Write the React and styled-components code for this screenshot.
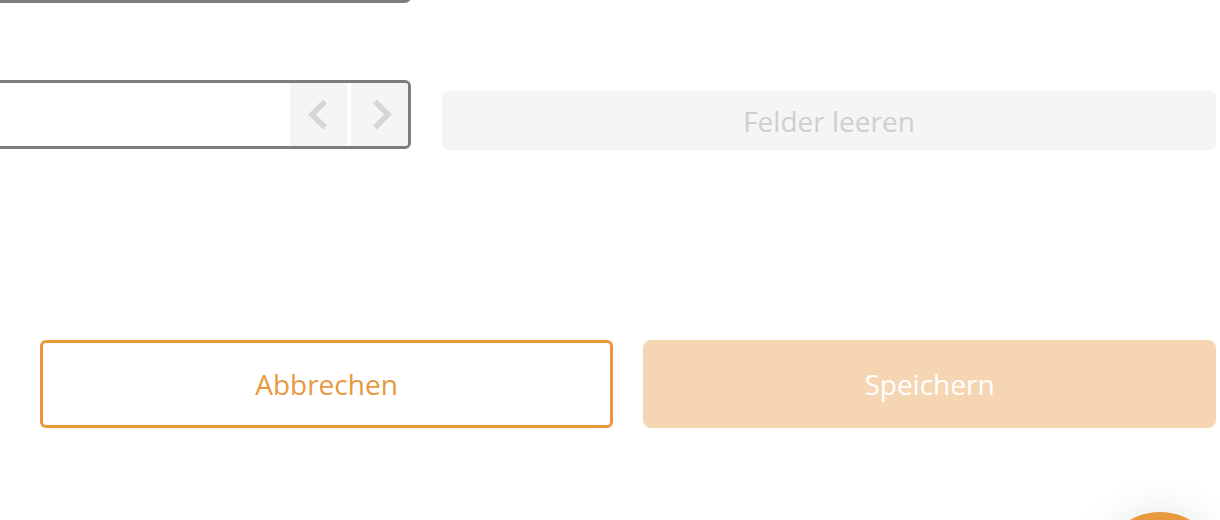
import React from 'react';
import styled, { createGlobalStyle } from 'styled-components';

const GlobalStyle = createGlobalStyle`
  html, body {
    margin: 0;
    padding: 0;
    background: #ffffff;
    overflow: hidden;
  }
  body {
    font-family: 'Open Sans', 'Noto Sans', sans-serif;
  }
`;

const Page = styled.div`
  width: 1220px;
  height: 520px;
  box-sizing: border-box;
  padding-right: 4px;
  overflow: hidden;
`;

const Fields = styled.div`
  display: grid;
  grid-template-columns: 451px 774px;
  column-gap: 31px;
  row-gap: 77px;
  margin-left: -40px;
  margin-top: -66px;
  align-items: start;
`;

const Input = styled.div`
  height: 69px;
  box-sizing: border-box;
  border: 3px solid #7f7d7a;
  border-radius: 6px;
  background: #fff;
  display: flex;
  justify-content: flex-end;
  overflow: hidden;
`;

const Arrows = styled.div`
  display: flex;
  gap: 4px;
`;

const ArrowButton = styled.button`
  width: 57px;
  height: 100%;
  border: none;
  padding: 0;
  background: #f5f5f5;
  display: flex;
  align-items: center;
  justify-content: center;
  cursor: pointer;
  svg {
    margin-left: ${(p) => (p.$next ? '4px' : '-2px')};
  }
`;

const GhostButton = styled.button`
  margin-top: 11px;
  height: 59px;
  border: none;
  border-radius: 6px;
  background: #f5f5f4;
  color: #cfcfcf;
  font-family: inherit;
  font-size: 28px;
  font-weight: 500;
  cursor: default;
`;

const Actions = styled.div`
  display: grid;
  grid-template-columns: 1fr 1fr;
  gap: 30px;
  margin-top: 190px;
  padding-left: 40px;
`;

const ActionButton = styled.button`
  height: 88px;
  box-sizing: border-box;
  font-family: inherit;
  font-size: 28px;
  font-weight: 500;
  border-radius: ${(p) => (p.$primary ? '8px' : '6px')};
  border: ${(p) => (p.$primary ? 'none' : '3px solid #e8993e')};
  background: ${(p) => (p.$primary ? '#f5d5b2' : '#ffffff')};
  color: ${(p) => (p.$primary ? '#ffffff' : '#e8993e')};
  cursor: pointer;
`;

const Fab = styled.div`
  position: fixed;
  right: 0;
  top: 512px;
  width: 120px;
  height: 120px;
  border-radius: 50%;
  background: #e8993e;
  box-shadow: 0 0 40px rgba(0, 0, 0, 0.1);
`;

const Chevron = ({ dir }) => (
  <svg width="20" height="31" viewBox="0 0 20 31">
    <polyline
      points={dir === 'left' ? '17,2.5 4,15.5 17,28.5' : '3,2.5 16,15.5 3,28.5'}
      fill="none"
      stroke="#d6d6d6"
      strokeWidth="5.5"
    />
  </svg>
);

export default function App() {
  return (
    <Page>
      <GlobalStyle />
      <Fields>
        <Input />
        <div />
        <Input>
          <Arrows>
            <ArrowButton aria-label="zurück">
              <Chevron dir="left" />
            </ArrowButton>
            <ArrowButton $next aria-label="weiter">
              <Chevron dir="right" />
            </ArrowButton>
          </Arrows>
        </Input>
        <GhostButton>Felder leeren</GhostButton>
      </Fields>
      <Actions>
        <ActionButton>Abbrechen</ActionButton>
        <ActionButton $primary>Speichern</ActionButton>
      </Actions>
      <Fab />
    </Page>
  );
}
